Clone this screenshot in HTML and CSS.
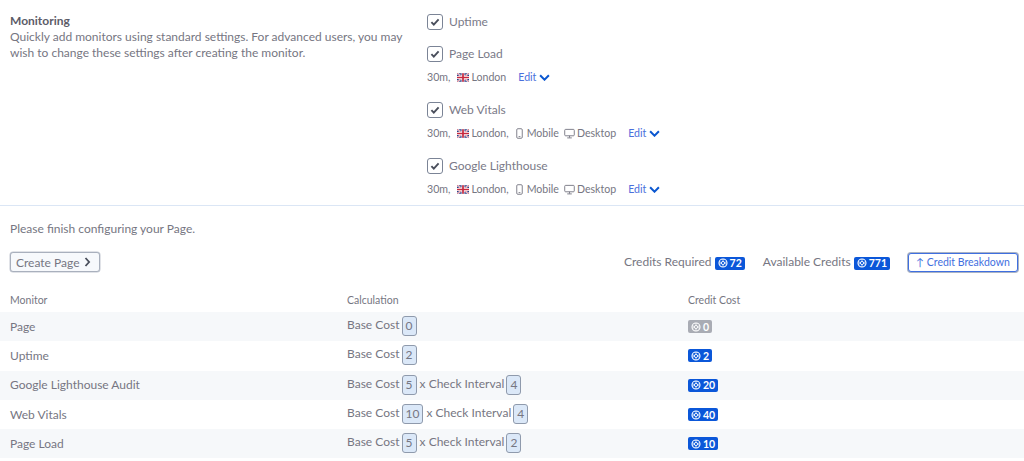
FILE: index.html
```html
<!DOCTYPE html>
<html lang="en">
  <head>
    <meta charset="UTF-8" />
    <title>Monitoring</title>
    <link rel="stylesheet" href="styles.css">
  </head>
  <body>
    <svg class="sprites" width="0" height="0">
      <symbol id="flag" viewBox="0 0 14 10">
        <rect width="14" height="10" rx="1" fill="#2b3f87" />
        <path d="M0 0l14 10M14 0L0 10" stroke="#fff" stroke-width="2" />
        <path d="M0 0l14 10M14 0L0 10" stroke="#c8283e" stroke-width=".7" />
        <path d="M7 0v10M0 5h14" stroke="#fff" stroke-width="3.4" />
        <path d="M7 0v10M0 5h14" stroke="#c8283e" stroke-width="2" />
      </symbol>
      <symbol id="mobile" viewBox="0 0 10 12">
        <rect x="2" y=".8" width="6" height="10.4" rx="1.2" fill="none" stroke="currentColor" />
        <path d="M4 9.4h2" stroke="currentColor" />
      </symbol>
      <symbol id="desktop" viewBox="0 0 12 12">
        <rect x=".8" y="1.5" width="10.4" height="7" rx="1" fill="none" stroke="currentColor" />
        <path d="M6 8.5v2M3.5 10.8h5" stroke="currentColor" />
      </symbol>
      <symbol id="chevron" viewBox="0 0 10 6">
        <path d="M1 1l4 4 4-4" fill="none" stroke="currentColor" stroke-width="1.8" />
      </symbol>
      <symbol id="credit" viewBox="0 0 10 10">
        <circle cx="5" cy="5" r="4" fill="none" stroke="currentColor" stroke-width="1.1" />
        <circle cx="5" cy="5" r="1.6" fill="none" stroke="currentColor" stroke-width=".9" />
        <path d="M5 1v2.4M5 6.6V9M1.2 3.8l2.3.7M6.5 5.5l2.3.7M1.2 6.2l2.3-.7M6.5 4.5l2.3-.7" stroke="currentColor" stroke-width=".7" />
      </symbol>
    </svg>

    <section class="monitoring">
      <div class="intro">
        <h2>Monitoring</h2>
        <p>Quickly add monitors using standard settings. For advanced users, you may wish to change these settings after creating the monitor.</p>
      </div>
      <div class="options">
        <div class="option">
          <label class="check"><span class="box"><svg viewBox="0 0 12 10"><path d="M1.5 5.2l3 3 6-6.4" /></svg></span>Uptime</label>
        </div>
        <div class="option">
          <label class="check"><span class="box"><svg viewBox="0 0 12 10"><path d="M1.5 5.2l3 3 6-6.4" /></svg></span>Page Load</label>
          <div class="meta">
            <span class="interval">30m,</span>
            <span class="item"><svg class="flag"><use href="#flag" /></svg>London</span>
            <a class="edit">Edit <svg class="chev"><use href="#chevron" /></svg></a>
          </div>
        </div>
        <div class="option">
          <label class="check"><span class="box"><svg viewBox="0 0 12 10"><path d="M1.5 5.2l3 3 6-6.4" /></svg></span>Web Vitals</label>
          <div class="meta">
            <span class="interval">30m,</span>
            <span class="item"><svg class="flag"><use href="#flag" /></svg>London,</span>
            <span class="item"><svg class="device"><use href="#mobile" /></svg>Mobile</span>
            <span class="item"><svg class="device"><use href="#desktop" /></svg>Desktop</span>
            <a class="edit">Edit <svg class="chev"><use href="#chevron" /></svg></a>
          </div>
        </div>
        <div class="option">
          <label class="check"><span class="box"><svg viewBox="0 0 12 10"><path d="M1.5 5.2l3 3 6-6.4" /></svg></span>Google Lighthouse</label>
          <div class="meta">
            <span class="interval">30m,</span>
            <span class="item"><svg class="flag"><use href="#flag" /></svg>London,</span>
            <span class="item"><svg class="device"><use href="#mobile" /></svg>Mobile</span>
            <span class="item"><svg class="device"><use href="#desktop" /></svg>Desktop</span>
            <a class="edit">Edit <svg class="chev"><use href="#chevron" /></svg></a>
          </div>
        </div>
      </div>
    </section>

    <section class="summary">
      <p class="notice">Please finish configuring your Page.</p>
      <div class="actions">
        <button class="create">Create Page <svg viewBox="0 0 7 10"><path d="M1.5 1l3.6 4-3.6 4" /></svg></button>
        <div class="credits">
          <span class="credit-label">Credits Required <span class="badge"><svg><use href="#credit" /></svg>72</span></span>
          <span class="credit-label">Available Credits <span class="badge"><svg><use href="#credit" /></svg>771</span></span>
          <button class="breakdown">↑ Credit Breakdown</button>
        </div>
      </div>
      <table>
        <tr>
          <th>Monitor</th>
          <th>Calculation</th>
          <th>Credit Cost</th>
        </tr>
        <tr>
          <td>Page</td>
          <td>Base Cost <span class="num">0</span></td>
          <td><span class="badge off"><svg><use href="#credit" /></svg>0</span></td>
        </tr>
        <tr>
          <td>Uptime</td>
          <td>Base Cost <span class="num">2</span></td>
          <td><span class="badge"><svg><use href="#credit" /></svg>2</span></td>
        </tr>
        <tr>
          <td>Google Lighthouse Audit</td>
          <td>Base Cost <span class="num">5</span> x Check Interval <span class="num">4</span></td>
          <td><span class="badge"><svg><use href="#credit" /></svg>20</span></td>
        </tr>
        <tr>
          <td>Web Vitals</td>
          <td>Base Cost <span class="num">10</span> x Check Interval <span class="num">4</span></td>
          <td><span class="badge"><svg><use href="#credit" /></svg>40</span></td>
        </tr>
        <tr>
          <td>Page Load</td>
          <td>Base Cost <span class="num">5</span> x Check Interval <span class="num">2</span></td>
          <td><span class="badge"><svg><use href="#credit" /></svg>10</span></td>
        </tr>
      </table>
    </section>
  </body>
</html>
```

FILE: styles.css
```css
body {
  margin: 0;
  font-family: "Lato", "Open Sans", sans-serif;
  font-size: 12px;
  color: #767682;
  background-color: #fff;
  overflow: hidden;
}

.sprites {
  position: absolute;
}

.monitoring {
  display: grid;
  grid-template-columns: 417px 1fr;
  padding: 13px 10px 0;
  height: 192px;
  border-bottom: 1px solid #dbe6f5;
}

.intro h2 {
  margin: 0;
  font-size: 12px;
  line-height: 16px;
  font-weight: 700;
  color: #5c5c68;
}

.intro p {
  margin: 0;
  line-height: 16px;
  width: 400px;
}

.options {
  display: flex;
  flex-direction: column;
}

.option {
  height: 56px;
}

.option:first-child {
  height: 32px;
}

.check {
  display: flex;
  align-items: center;
  gap: 6px;
  height: 17px;
  font-size: 12px;
  color: #7a7a88;
}

.box {
  box-sizing: border-box;
  width: 16px;
  height: 16px;
  border: 1.5px solid #7b8496;
  border-radius: 3px;
  display: flex;
  align-items: center;
  justify-content: center;
}

.box svg {
  width: 10px;
  height: 8px;
}

.box path {
  fill: none;
  stroke: #4a4f5c;
  stroke-width: 2.4;
}

.meta {
  display: flex;
  align-items: center;
  gap: 5px;
  margin-top: 7px;
  height: 16px;
  font-size: 10.6px;
  color: #767682;
}

.interval {
  margin-right: 2px;
}

.item {
  display: flex;
  align-items: center;
  gap: 2px;
}

.flag {
  width: 12px;
  height: 9px;
}

.device {
  width: 11px;
  height: 11px;
  color: #767682;
}

.edit {
  margin-left: 7px;
  color: #4a6fdc;
  display: flex;
  align-items: center;
  gap: 3px;
}

.chev {
  width: 11px;
  height: 7px;
  color: #0b57d0;
}

.notice {
  margin: 15px 10px 0;
  line-height: 16px;
}

.actions {
  display: flex;
  justify-content: space-between;
  align-items: center;
  margin: 14px 6px 0 10px;
  height: 22px;
}

button {
  font-family: inherit;
  border-radius: 3px;
}

.create {
  display: flex;
  align-items: center;
  gap: 5px;
  height: 20px;
  width: 90px;
  padding: 0 5px;
  font-size: 12px;
  color: #767682;
  background-color: #f7f9fc;
  border: 1px solid #a9b0bd;
  box-shadow: 0 0 0 .5px #c3c8d2;
}

.create svg {
  width: 7px;
  height: 10px;
}

.create path {
  fill: none;
  stroke: #4a4f5c;
  stroke-width: 1.8;
}

.credits {
  display: flex;
  align-items: center;
  gap: 18px;
}

.breakdown {
  height: 19px;
  width: 110px;
  padding: 0;
  white-space: nowrap;
  font-size: 10.5px;
  color: #3f6fe0;
  background-color: #fff;
  border: 1px solid #3f6fe0;
  box-shadow: 0 0 0 1px #aab3c4;
}

.badge {
  display: inline-flex;
  align-items: center;
  gap: 2px;
  height: 13px;
  padding: 0 3px;
  vertical-align: middle;
  font-size: 10.5px;
  font-weight: 700;
  color: #fff;
  background-color: #0b57d9;
  border-radius: 2px;
}

.badge svg {
  width: 10px;
  height: 10px;
}

.badge.off {
  background-color: #a9acb4;
}

table {
  width: 100%;
  margin-top: 14px;
  border-collapse: collapse;
  table-layout: fixed;
}

th {
  height: 25px;
  padding: 0 0 0 10px;
  text-align: left;
  font-size: 10.5px;
  font-weight: 400;
}

th:first-child,
td:first-child {
  width: 327px;
}

th:nth-child(2),
td:nth-child(2) {
  width: 331px;
}

td {
  height: 28.3px;
  padding: 0 0 1px 10px;
  font-size: 12px;
}

td .badge {
  margin-bottom: 1px;
}

tr:nth-child(even) td {
  background-color: #f6f8fa;
}

.num {
  display: inline-block;
  box-sizing: border-box;
  min-width: 15px;
  height: 20px;
  margin-left: -1px;
  padding: 0 3px;
  line-height: 18px;
  text-align: center;
  vertical-align: middle;
  background-color: #dbe8f8;
  border: 1px solid #8f9aac;
  border-radius: 3px;
}
```
